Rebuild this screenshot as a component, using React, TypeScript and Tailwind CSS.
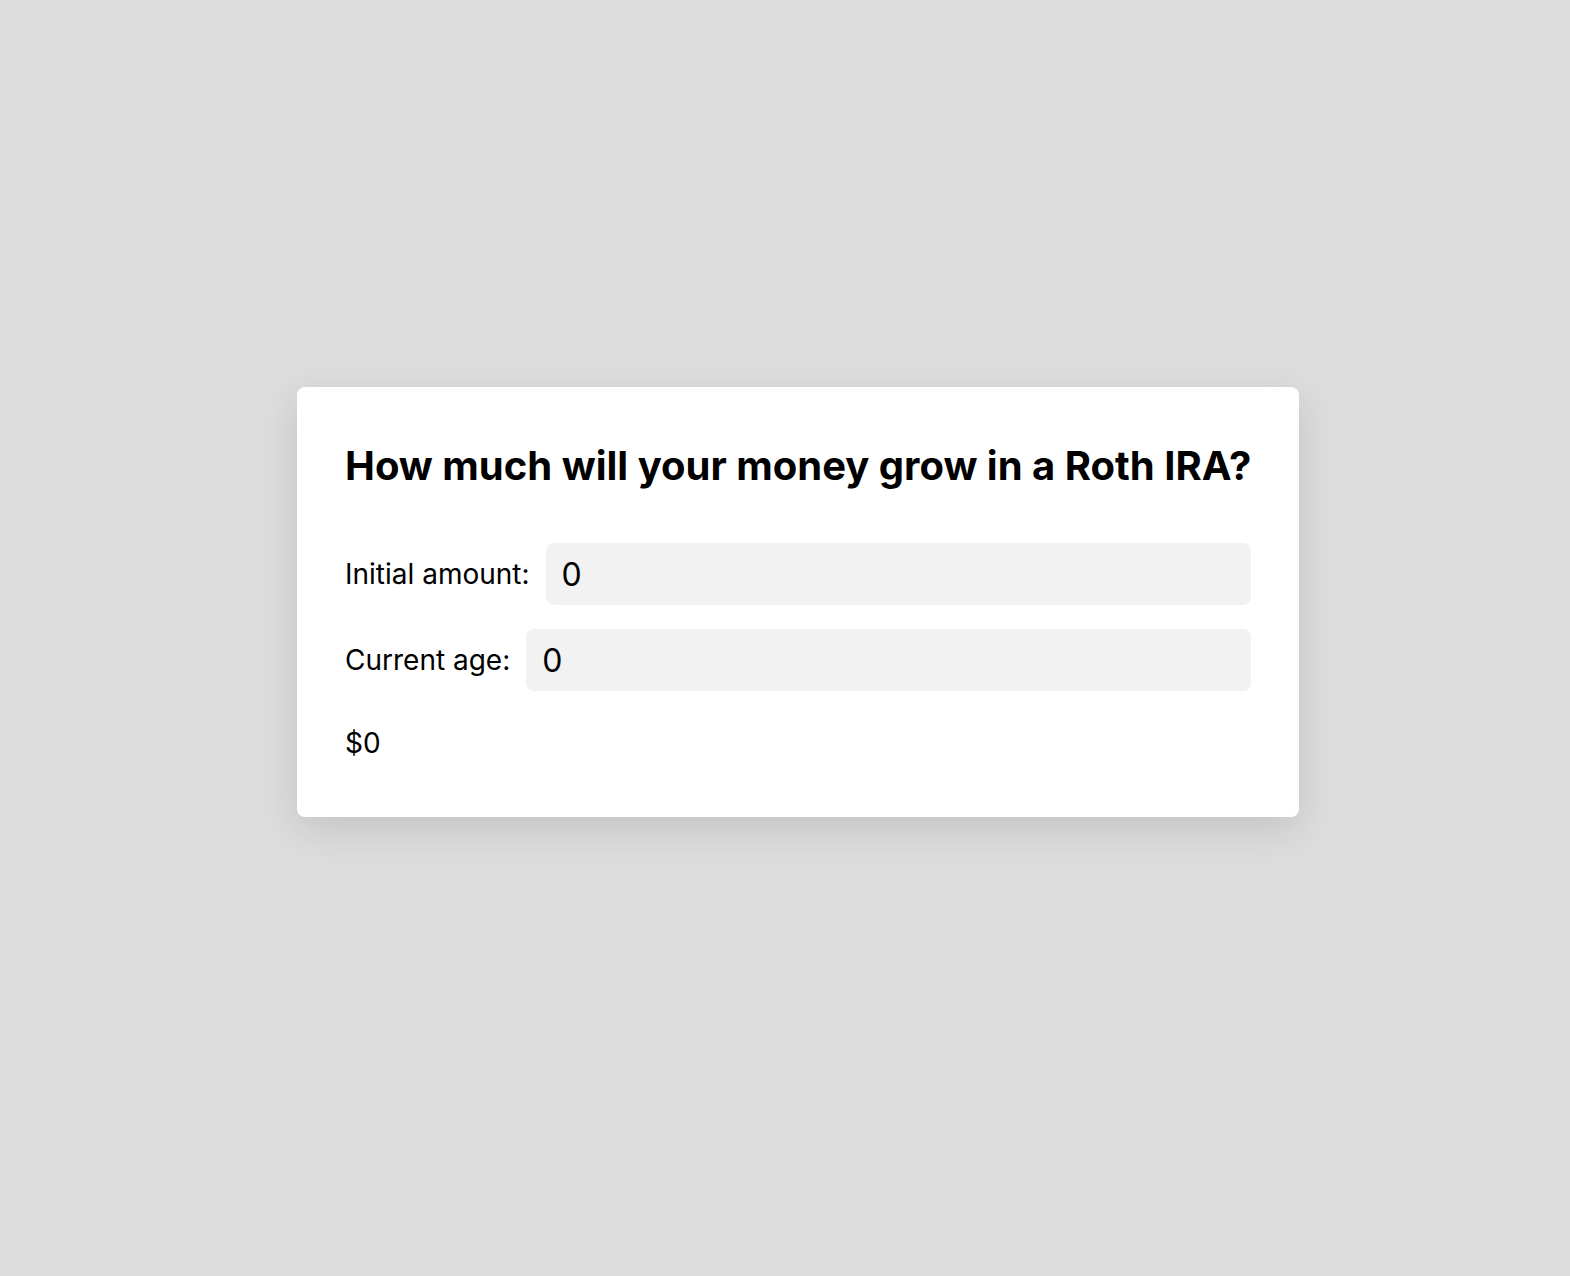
import { useState } from "react";

export default function App() {
  const [amount, setAmount] = useState("0");
  const [age, setAge] = useState("0");

  const total = Number(amount) || 0;

  return (
    <div className="min-h-screen bg-[#dddddd] flex items-center justify-center pl-[26px] pb-[72px] font-['Inter','Liberation_Sans',sans-serif] text-black">
      <div className="w-[1002px] bg-white rounded-lg px-12 pt-[55px] pb-[53px] shadow-[0_12px_40px_rgba(0,0,0,0.12)]">
        <h1 className="text-[40px] leading-[48px] font-bold whitespace-nowrap">
          How much will your money grow in a Roth IRA?
        </h1>

        <div className="mt-[53px] flex flex-col gap-6">
          <label className="flex items-center gap-4">
            <span className="text-[28px] shrink-0">Initial amount:</span>
            <input
              type="text"
              value={amount}
              onChange={(e) => setAmount(e.target.value)}
              className="flex-1 h-[62px] rounded-lg bg-[#f2f2f2] px-4 text-[32px] outline-none"
            />
          </label>
          <label className="flex items-center gap-4">
            <span className="text-[28px] shrink-0">Current age:</span>
            <input
              type="text"
              value={age}
              onChange={(e) => setAge(e.target.value)}
              className="flex-1 h-[62px] rounded-lg bg-[#f2f2f2] px-4 text-[32px] outline-none"
            />
          </label>
          <p className="text-[28px] mt-[7px]">${total}</p>
        </div>
      </div>
    </div>
  );
}
